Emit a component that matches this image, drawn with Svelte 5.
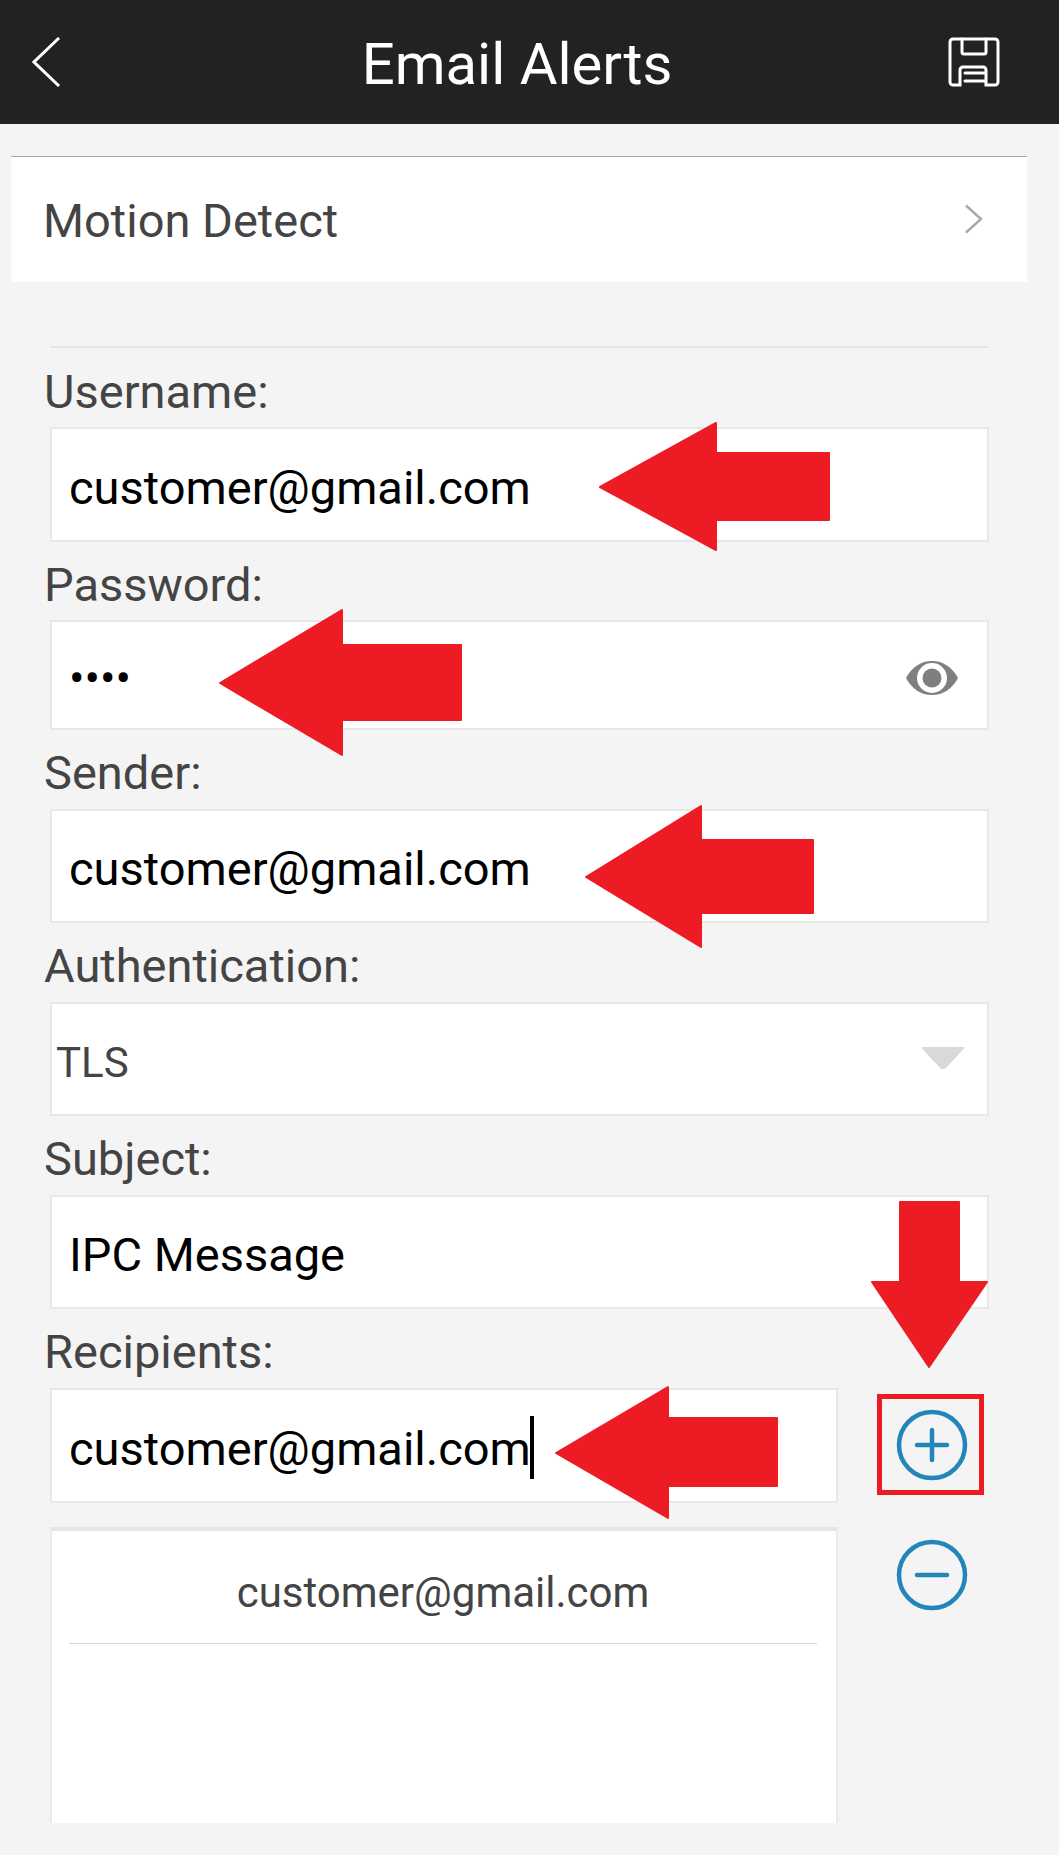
<script>
  const recipient = 'customer@gmail.com';
  const arrows = [
    '600,487 716,423 716,453 829,453 829,520 716,520 716,550',
    '220,683 342,610 342,645 461,645 461,720 342,720 342,755',
    '586,877 701,806 701,840 813,840 813,913 701,913 701,947',
    '556,1453 668,1387 668,1418 777,1418 777,1486 668,1486 668,1518',
    '900,1202 959,1202 959,1282 987,1282 929,1367 872,1282 900,1282'
  ];
</script>

<div class="page">
  <header class="topbar">
    <svg class="back" width="30" height="50" viewBox="0 0 30 50" aria-hidden="true">
      <path d="M27 1 2 25l25 24" />
    </svg>
    <h1>Email Alerts</h1>
    <svg class="save" width="52" height="50" viewBox="0 0 52 50" aria-hidden="true">
      <path d="M5 2h42a3 3 0 0 1 3 3v40a3 3 0 0 1-3 3h-9V33a3 3 0 0 0-3-3H15a3 3 0 0 0-3 3v15H5a3 3 0 0 1-3-3V5a3 3 0 0 1 3-3Z" />
      <path d="M14 2v13a2 2 0 0 0 2 2h20a2 2 0 0 0 2-2V2M17 36h20M17 44h20" />
    </svg>
  </header>

  <div class="motion">
    <span>Motion Detect</span>
    <svg width="20" height="30" viewBox="0 0 20 30" aria-hidden="true">
      <path d="M2 1.500 17 15 2 28.500" />
    </svg>
  </div>

  <main class="form">
    <div class="cut-off"></div>

    <div class="label first">Username:</div>
    <div class="field value h115">customer@gmail.com</div>

    <div class="label second">Password:</div>
    <div class="field value h110 password">
      <span class="dots">••••</span>
      <svg class="eye" width="54" height="36" viewBox="0 0 54 36" aria-hidden="true">
        <path d="M1 18C7 7 16 1 27 1s20 6 26 17c-6 11-15 17-26 17S7 29 1 18Z" fill="#7f7f7f" />
        <circle cx="27" cy="18" r="15" fill="#fff" />
        <circle cx="27" cy="18" r="9.500" fill="#7f7f7f" />
      </svg>
    </div>

    <div class="label">Sender:</div>
    <div class="field value h114">customer@gmail.com</div>

    <div class="label">Authentication:</div>
    <div class="field select h114">
      <span>TLS</span>
      <svg width="44" height="24" viewBox="0 0 44 24" aria-hidden="true">
        <path d="M2 1h40a1 1 0 0 1 1 1.500L24 23h-4L1 2.500A1 1 0 0 1 2 1Z" fill="#d9d9d9" />
      </svg>
    </div>

    <div class="label">Subject:</div>
    <div class="field value h114">IPC Message</div>

    <div class="label">Recipients:</div>
    <div class="recipients">
      <div class="left">
        <div class="field value h115">customer@gmail.com<i class="caret"></i></div>
        <div class="list">
          <div class="list-item">{recipient}</div>
        </div>
      </div>
      <div class="actions">
        <svg width="72" height="72" viewBox="0 0 72 72" aria-hidden="true">
          <circle cx="36" cy="36" r="33" />
          <path d="M36 21v30M21 36h30" />
        </svg>
        <svg width="72" height="72" viewBox="0 0 72 72" aria-hidden="true">
          <circle cx="36" cy="36" r="33" />
          <path d="M21 36h30" />
        </svg>
      </div>
    </div>
  </main>

  <svg class="annotations" width="1059" height="1855" viewBox="0 0 1059 1855" aria-hidden="true">
    {#each arrows as points}
      <polygon {points} />
    {/each}
    <rect x="879.500" y="1396.500" width="102" height="96" />
  </svg>
</div>

<style>
  :global(body) {
    margin: 0;
    background: #f4f4f4;
  }
  .page {
    position: relative;
    width: 1059px;
    height: 1855px;
    overflow: hidden;
    background: #f4f4f4;
    font-family: Roboto, "Liberation Sans", sans-serif;
  }
  .topbar {
    height: 124px;
    box-sizing: border-box;
    padding: 0 59px 0 32px;
    background: #222;
    display: flex;
    align-items: center;
    justify-content: space-between;
  }
  .topbar h1 {
    margin: 4px 0 0 24px;
    color: #fff;
    font-size: 58px;
    font-weight: 400;
    line-height: 1;
  }
  .topbar svg {
    fill: none;
    stroke: #fff;
  }
  .back {
    stroke-width: 3;
  }
  .save {
    stroke-width: 3;
    stroke-linecap: round;
  }
  .motion {
    height: 126px;
    box-sizing: border-box;
    margin: 32px 32px 0 11px;
    padding: 2px 43px 0 32px;
    border-top: 1px solid #aaa;
    background: #fff;
    color: #444;
    font-size: 47px;
    display: flex;
    align-items: center;
    justify-content: space-between;
  }
  .motion svg {
    fill: none;
    stroke: #aaa;
    stroke-width: 2.500;
    margin-bottom: 4px;
  }
  .form {
    margin-left: 50px;
    width: 939px;
  }
  .cut-off {
    height: 66px;
    box-sizing: border-box;
    border-bottom: 2px solid #e6e6e6;
  }
  .label {
    height: 79px;
    margin-left: -6px;
    color: #444;
    font-size: 47px;
    line-height: 86px;
  }
  .label.first {
    line-height: 88px;
  }
  .label.second {
    height: 78px;
  }
  .field {
    box-sizing: border-box;
    border: 2px solid #e8e8e8;
    background: #fff;
    display: flex;
    align-items: center;
  }
  .value {
    padding: 5px 0 0 17px;
    color: #000;
    font-size: 47px;
  }
  .h115 { height: 115px; }
  .h114 { height: 114px; }
  .h110 { height: 110px; }
  .password {
    justify-content: space-between;
    padding-right: 28px;
  }
  .dots {
    font-size: 46px;
    margin-top: 1px;
  }
  .select {
    justify-content: space-between;
    padding: 0 22px 0 4px;
    color: #444;
    font-size: 42px;
  }
  .select span {
    margin-top: 6px;
  }
  .select svg {
    margin-bottom: 2px;
  }
  .caret {
    width: 4px;
    height: 63px;
    margin: 0 0 2px -1px;
    background: #000;
  }
  .recipients {
    display: flex;
  }
  .left {
    width: 788px;
  }
  .list {
    height: 296px;
    margin-top: 24px;
    box-sizing: border-box;
    border: 2px solid #ebebeb;
    border-top: 4px solid #e6e6e6;
    border-bottom: 0;
    background: #fff;
    padding: 0 19px 0 17px;
  }
  .list-item {
    height: 112px;
    border-bottom: 1px solid #d6d6d6;
    color: #444;
    font-size: 42px;
    line-height: 124px;
    text-align: center;
  }
  .actions {
    flex: 1;
    padding: 21px 11px 0 58px;
    display: flex;
    flex-direction: column;
    gap: 58px;
  }
  .actions svg {
    display: block;
    fill: none;
    stroke: #2386b8;
    stroke-width: 4.500;
    stroke-linecap: round;
  }
  .annotations {
    position: absolute;
    top: 0;
    left: 0;
    pointer-events: none;
  }
  .annotations polygon {
    fill: #ed1c24;
    stroke: #ed1c24;
    stroke-width: 2;
    stroke-linejoin: round;
  }
  .annotations rect {
    fill: none;
    stroke: #ed1c24;
    stroke-width: 5;
  }
</style>
